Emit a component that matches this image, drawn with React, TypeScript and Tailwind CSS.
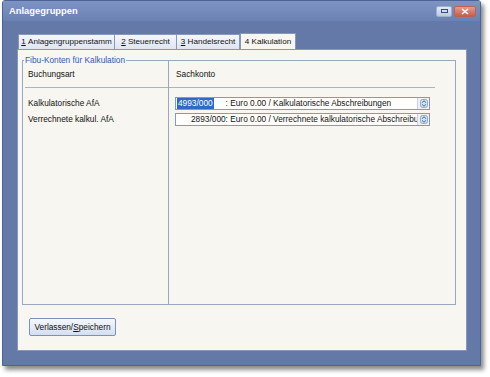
import { ReactNode } from "react";

const font = { fontFamily: '"Liberation Sans", Arial, sans-serif' };

function Tab({ num, label, width, active }: { num: string; label: string; width: string; active?: boolean }) {
  if (active) {
    return (
      <div className={`-mb-px mt-[-2px] flex h-[17px] items-center justify-center border border-b-0 border-[#8797b8] bg-[#f8f6f0] text-[8.1px] text-[#111] ${width}`}>
        {num} {label}
      </div>
    );
  }
  return (
    <div className={`flex h-[15px] items-center justify-center border border-r-0 border-b-0 border-[#8797b8] bg-gradient-to-b from-[#f4f7fb] to-[#dfe6f1] text-[8.1px] text-[#111] ${width}`}>
      <span className="underline">{num}</span>&nbsp;{label}
    </div>
  );
}

function Spinner() {
  return (
    <div className="flex h-full w-[12px] items-center justify-center border-l border-[#c5d2e6] bg-[#eef3fa]">
      <svg width="8" height="9" viewBox="0 0 8 9">
        <rect x="0.5" y="0.5" width="7" height="8" rx="2" fill="#d4e1f5" stroke="#8fa9d6" />
        <path d="M2 3.6 L4 1.8 L6 3.6" fill="none" stroke="#3f68b7" strokeWidth="1" />
        <path d="M2 5.4 L4 7.2 L6 5.4" fill="none" stroke="#3f68b7" strokeWidth="1" />
      </svg>
    </div>
  );
}

function Combo({ children }: { children: ReactNode }) {
  return (
    <div className="flex h-[13px] w-[255px] items-stretch border border-[#7f9db9] bg-white">
      <div className="flex flex-1 items-center overflow-hidden whitespace-nowrap text-[8.3px] text-[#111]">
        {children}
      </div>
      <Spinner />
    </div>
  );
}

export default function App() {
  return (
    <div className="h-[377px] w-[490px] bg-white" style={font}>
      <div className="ml-[2px] flex h-[366px] w-[479px] flex-col rounded-t-[3px] border border-[#4d6395] bg-[#6479a8] shadow-[3px_4px_4px_rgba(0,0,0,0.45)]">
        {/* title bar */}
        <div className="flex h-[20px] items-center justify-between bg-gradient-to-b from-[#7d94c3] to-[#6a82b3] pl-[6px] pr-[4px]">
          <span className="text-[9.4px] font-bold text-white">Anlagegruppen</span>
          <div className="flex gap-[2px]">
            <div className="flex h-[11px] w-[16px] items-center justify-center rounded-[2px] border border-[#9fb0cf] bg-gradient-to-b from-[#e3eaf5] to-[#bccbe3]">
              <div className="h-[4px] w-[7px] border border-[#3a4d78]" />
            </div>
            <div className="flex h-[11px] w-[22px] items-center justify-center rounded-[2px] border border-[#b9625a] bg-gradient-to-b from-[#e69a8a] to-[#c85d4c]">
              <svg width="8" height="7" viewBox="0 0 8 7">
                <path d="M1 1 L7 6 M7 1 L1 6" stroke="#fff" strokeWidth="1.6" />
              </svg>
            </div>
          </div>
        </div>

        {/* body */}
        <div className="flex flex-1 flex-col px-[14px] pt-[13px]">
          {/* tabs */}
          <div className="flex items-end pl-px">
            <Tab num="1" label="Anlagengruppenstamm" width="w-[96px]" />
            <Tab num="2" label="Steuerrecht" width="w-[62px]" />
            <div className="border-r border-[#8797b8]">
              <Tab num="3" label="Handelsrecht" width="w-[63px]" />
            </div>
            <Tab num="4" label="Kalkulation" width="w-[56px]" active />
          </div>

          {/* panel */}
          <div className="flex h-[302px] w-[450px] flex-col border border-[#8797b8] bg-[#f8f6f0]">
            {/* group box */}
            <div className="relative ml-[4px] mt-[10px] flex h-[245px] w-[434px] border border-[#9ba7bf]">
              <span className="absolute left-[1px] top-[-6px] bg-[#f8f6f0] px-px text-[8.3px] leading-[10px] text-[#3159a8]">
                Fibu-Konten für Kalkulation
              </span>
              {/* left column */}
              <div className="flex w-[146px] flex-col border-r border-[#9ba7bf]">
                <div className="ml-[2px] flex h-[27px] items-center border-b border-[#aeb4bf] pl-[3px] text-[8.3px] text-[#111]">
                  Buchungsart
                </div>
                <div className="flex flex-col gap-[3px] pl-[5px] pt-[9px] text-[8.3px] text-[#111]">
                  <div className="flex h-[13px] items-center">Kalkulatorische AfA</div>
                  <div className="flex h-[13px] items-center">Verrechnete kalkul. AfA</div>
                </div>
              </div>
              {/* right column */}
              <div className="flex flex-1 flex-col">
                <div className="mr-[20px] flex h-[27px] items-center border-b border-[#aeb4bf] pl-[7px] text-[8.3px] text-[#111]">
                  Sachkonto
                </div>
                <div className="flex flex-col gap-[3px] pl-[6px] pt-[9px]">
                  <Combo>
                    <span className="ml-px bg-[#316ac5] px-px text-white">4993/000</span>
                    <span className="pl-[12px]">: Euro 0.00 / Kalkulatorische Abschreibungen</span>
                  </Combo>
                  <Combo>
                    <span className="pl-[15px]">2893/000: Euro 0.00 / Verrechnete kalkulatorische Abschreibu</span>
                  </Combo>
                </div>
              </div>
            </div>

            {/* button */}
            <button className="ml-[11px] mt-[13px] flex h-[18px] w-[87px] items-center justify-center rounded-[2px] border border-[#7d90b6] bg-gradient-to-b from-[#f5f8fc] to-[#d3dff0] text-[8.3px] text-[#111]">
              Verlassen/<span className="underline">S</span>peichern
            </button>
          </div>
        </div>
      </div>
    </div>
  );
}
